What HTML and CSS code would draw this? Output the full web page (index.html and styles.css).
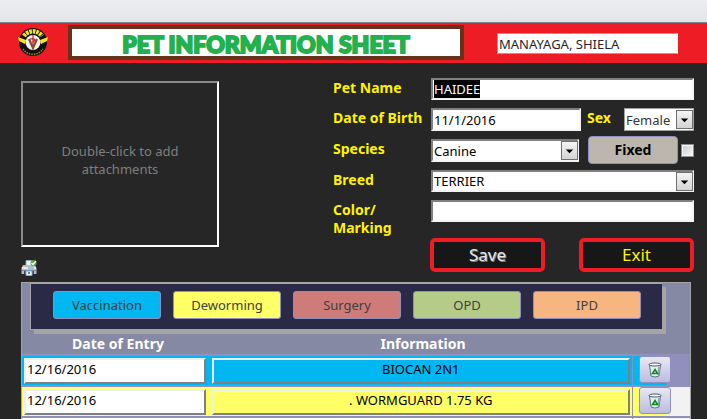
FILE: index.html
```html
<!DOCTYPE html>
<html lang="en">
<head>
<meta charset="utf-8">
<title>Pet Information Sheet</title>
<link rel="stylesheet" href="styles.css">
</head>
<body>
<div class="toolbar"></div>
<header class="banner">
  <svg class="logo" viewBox="0 0 32 32" aria-hidden="true">
    <circle cx="16" cy="16" r="14" fill="#111"/>
    <path d="M7 10A11 11 0 0 1 25 10" fill="none" stroke="#f4e61d" stroke-width="4.500" stroke-dasharray="2.600 0.800"/>
    <path d="M1 11L9 14L8 18L2 15Z M31 11L23 14L24 18L30 15Z" fill="#f4e61d"/>
    <path d="M6 23A12 12 0 0 0 26 23" fill="none" stroke="#8f8824" stroke-width="1.600" stroke-dasharray="1.500 1"/>
    <circle cx="16" cy="16.500" r="7.500" fill="#f4f1ee"/>
    <path d="M12 13L16 22L20 13" fill="none" stroke="#8a4a35" stroke-width="2.200"/>
    <path d="M16 9V20M13 13C19 12 19 15 15 16" fill="none" stroke="#c22a2a" stroke-width="1.200"/>
  </svg>
  <h1 class="title">PET INFORMATION SHEET</h1>
  <input class="user" type="text" value="MANAYAGA, SHIELA" aria-label="Owner">
</header>
<main class="sheet">
  <div class="record">
    <div class="media">
      <button class="attach" type="button">Double-click to add attachments</button>
      <button class="print" type="button" aria-label="Print">
        <svg viewBox="0 0 16 16">
          <path d="M5 0.500H11V6H5Z" fill="#eef4fb" stroke="#8ba3bd"/>
          <path d="M2 5H14L15.500 8V14H0.500V8Z" fill="#b9bcc0"/>
          <path d="M1 7H15V9H1Z" fill="#e9eaec"/>
          <path d="M1 10H15V11H1Z" fill="#85898e"/>
          <path d="M7 7.500H13V8.500H7Z" fill="#4c9be8"/>
          <path d="M3 11H13V14H3Z" fill="#45484c"/>
          <path d="M5 11H11V15.500H5Z" fill="#f3f8fe" stroke="#7fa6d3"/>
          <path d="M7 12H9V14H7Z" fill="#3d84d6"/>
          <circle cx="12.500" cy="3" r="3" fill="#58a83e"/>
          <path d="M10.500 3L12 4.500L15 1" fill="none" stroke="#fff" stroke-width="1.200"/>
        </svg>
      </button>
    </div>
    <form class="form">
      <div class="row">
        <label for="name">Pet Name</label>
        <input class="field" id="name" type="text" value="HAIDEE">
      </div>
      <div class="row tall">
        <label for="dob">Date of Birth</label>
        <input class="field" id="dob" type="text" value="11/1/2016">
        <label class="sex-label" for="sex">Sex</label>
        <span class="combo sex">
          <select class="field" id="sex"><option>Female</option><option>Male</option></select>
          <svg class="arrow" viewBox="0 0 16 18" aria-hidden="true"><path d="M4 8H12L8 12Z"/></svg>
        </span>
      </div>
      <div class="row tall">
        <label for="species">Species</label>
        <span class="combo">
          <select class="field" id="species"><option>Canine</option><option>Feline</option></select>
          <svg class="arrow" viewBox="0 0 16 18" aria-hidden="true"><path d="M4 8H12L8 12Z"/></svg>
        </span>
        <button class="fixed" type="button">Fixed</button>
        <input class="check" type="checkbox" aria-label="Fixed">
      </div>
      <div class="row">
        <label for="breed">Breed</label>
        <span class="combo">
          <select class="field" id="breed"><option>TERRIER</option></select>
          <svg class="arrow" viewBox="0 0 16 18" aria-hidden="true"><path d="M4 8H12L8 12Z"/></svg>
        </span>
      </div>
      <div class="row marking">
        <label for="color">Color/<br>Marking</label>
        <input class="field" id="color" type="text">
      </div>
      <div class="actions">
        <button class="save" type="button">Save</button>
        <button class="exit" type="button">Exit</button>
      </div>
    </form>
  </div>
  <section class="history">
    <nav class="tabs">
      <button class="tab vaccination" type="button">Vaccination</button>
      <button class="tab deworming" type="button">Deworming</button>
      <button class="tab surgery" type="button">Surgery</button>
      <button class="tab opd" type="button">OPD</button>
      <button class="tab ipd" type="button">IPD</button>
    </nav>
    <table class="entries">
      <thead>
        <tr><th class="col-date">Date of Entry</th><th>Information</th><th class="col-del"></th></tr>
      </thead>
      <tbody>
        <tr class="blue">
          <td><input class="cell" type="text" value="12/16/2016" aria-label="Date of entry"></td>
          <td><input class="cell info" type="text" value="BIOCAN 2N1" aria-label="Information"></td>
          <td class="del"><button class="bin" type="button" aria-label="Delete"><svg viewBox="0 0 14 16"><path d="M1.500 3L3 14Q7 16 11 14L12.500 3Z" fill="#e3eef2" stroke="#5d7480"/><path d="M10 5L9.500 13L11 13L12 5Z" fill="#8fa8b4"/><ellipse cx="7" cy="2.500" rx="6" ry="1.500" fill="#fff" stroke="#455a66"/><path d="M7 7.500L9.500 11.500H4.500Z" fill="none" stroke="#0c8a14" stroke-width="1.500"/></svg></button></td>
        </tr>
        <tr class="yellow">
          <td><input class="cell" type="text" value="12/16/2016" aria-label="Date of entry"></td>
          <td><input class="cell info" type="text" value=". WORMGUARD 1.75 KG" aria-label="Information"></td>
          <td class="del"><button class="bin" type="button" aria-label="Delete"><svg viewBox="0 0 14 16"><path d="M1.500 3L3 14Q7 16 11 14L12.500 3Z" fill="#e3eef2" stroke="#5d7480"/><path d="M10 5L9.500 13L11 13L12 5Z" fill="#8fa8b4"/><ellipse cx="7" cy="2.500" rx="6" ry="1.500" fill="#fff" stroke="#455a66"/><path d="M7 7.500L9.500 11.500H4.500Z" fill="none" stroke="#0c8a14" stroke-width="1.500"/></svg></button></td>
        </tr>
        <tr class="blank"><td></td><td></td><td class="del"></td></tr>
      </tbody>
    </table>
  </section>
</main>
<script src="script.js"></script>
</body>
</html>
```
FILE: styles.css
```css
* { box-sizing: border-box; }

body {
  margin: 0;
  height: 100vh;
  display: flex;
  flex-direction: column;
  overflow: hidden;
  background: #262626;
  font: 13px/18px "Noto Sans", "Open Sans", sans-serif;
  color: #000;
}

button, input, select { font: inherit; color: inherit; margin: 0; }
button { padding: 0; }
svg { display: block; }

.toolbar {
  height: 23px;
  flex: none;
  background: linear-gradient(#ecedf1, #e3e5e9);
  border-bottom: 1px solid #7d8791;
}

.banner {
  flex: none;
  height: 40px;
  display: flex;
  align-items: center;
  background: #ee1c24;
  padding: 0 29px 3px 17px;
}
.logo { width: 32px; height: 32px; margin-right: 19px; }
.title {
  flex: 1;
  height: 35px;
  margin: 1px 0 0;
  border: 4px solid #66331a;
  background: #fff;
  color: #22b14c;
  font: 900 23px/30px Lato, sans-serif;
  -webkit-text-stroke: 2px #22b14c;
  text-align: center;
  white-space: nowrap;
}
.user {
  width: 181px;
  height: 21px;
  margin: 4px 0 0 33px;
  padding: 0 1px;
  border: 1px solid #a0a0a0;
  border-right-color: #fff;
  background: #fff;
  color: #1f1f2e;
}

.sheet { flex: 1; min-height: 0; display: flex; flex-direction: column; }

.record { display: flex; padding: 15px 13px 0 21px; }
.media { width: 312px; flex: none; padding-top: 3px; }
.attach {
  display: block;
  width: 198px;
  height: 166px;
  padding: 0 30px 8px;
  background: #262626;
  border: 2px solid;
  border-color: #8a8a8a #fff #fff #8a8a8a;
  color: #7f7f7f;
}
.print {
  display: block;
  width: 16px;
  height: 16px;
  margin-top: 13px;
  border: 0;
  background: none;
}

.form { flex: 1; display: flex; flex-direction: column; }
.row { display: flex; height: 22px; margin-bottom: 8px; }
.row.tall { height: 23px; }
.row label {
  width: 98px;
  flex: none;
  padding-top: 1px;
  color: #fff200;
  font-size: 14px;
  font-weight: bold;
  white-space: nowrap;
}
.row.marking { height: 38px; margin: 0; }
.marking .field { height: 22px; }

.field {
  flex: 1;
  min-width: 0;
  width: 100%;
  height: 100%;
  padding: 0 1px;
  border: 2px solid;
  border-color: #808080 #f4f4f4 #f4f4f4 #808080;
  border-radius: 0;
  outline: 0;
  background: #fff;
  appearance: none;
}
.field::selection { background: #000; color: #fff; }
.combo { position: relative; flex: 1; }
.arrow {
  position: absolute;
  top: 2px;
  right: 1px;
  width: 17px;
  height: 19px;
  border: 1px solid #707070;
  background: linear-gradient(#f4f4f4, #d4d4d4);
  pointer-events: none;
}
.row .sex-label { width: 43px; padding-left: 6px; }
.combo.sex { flex: none; width: 70px; }
.sex .field { border: 1px solid #a0a0a0; color: #333; }
.fixed {
  width: 90px;
  height: 28px;
  margin: -3px 3px 0 9px;
  border: 1px solid #9090bd;
  border-radius: 4px;
  background: #bcb6ae;
  font-size: 14px;
  font-weight: bold;
}
.check {
  width: 13px;
  height: 13px;
  margin-top: 5px;
  appearance: none;
  border: 1px solid #8e8f8f;
  background: linear-gradient(135deg, #c9cdd3, #f6f6f6);
  box-shadow: inset 0 0 0 1px #f4f4f4;
}

.actions { display: flex; justify-content: space-between; margin-left: 97px; }
.actions button {
  width: 115px;
  height: 34px;
  border: 4px solid #ee1c24;
  border-radius: 5px;
  background: #171717;
  font-size: 17px;
}
.save { color: #e6e6e6; text-shadow: 1px 1px 0 #7c8694; }
.exit { color: #fff200; }

.history {
  flex: 1;
  min-height: 0;
  overflow: hidden;
  margin: 6px 16px 0 21px;
  border: 1px solid #a5a5a5;
  border-bottom: 0;
  background: #8689a3;
}
.tabs {
  display: flex;
  gap: 12px;
  height: 47px;
  margin: 0 28px 0 8px;
  padding: 7px 21px 10px 22px;
  border-left: 1px solid #a5a5a5;
  border-bottom: 1px solid #a5a5a5;
  border-top: 1px solid #a5a5a5;
  background: #2a2a46;
  box-shadow: 4px 4px 0 #a5a5a5;
}
.tab {
  flex: 1;
  border: 1px solid #9090bd;
  border-radius: 3px;
  color: #404040;
}
.vaccination { background: #00b7f1; }
.deworming { background: #ffff66; }
.surgery { background: #cf7b79; }
.opd { background: #b5cc88; }
.ipd { background: #f7b581; }

.entries { width: 100%; border-collapse: collapse; table-layout: fixed; }
.entries th {
  height: 24px;
  padding: 5px 0 1px 4px;
  color: #fff;
  font-size: 14px;
  font-weight: bold;
}
.col-date { width: 188px; }
.col-del { width: 58px; }
.entries td {
  height: 31px;
  padding: 2px 2px 1px;
  border-top: 2px solid #9090bd;
  vertical-align: top;
}
.blue { background: #00b7f1; }
.yellow { background: #ffff66; }
.blank { background: #fff; }
.cell {
  display: block;
  width: 182px;
  height: 26px;
  padding: 0 1px 4px;
  border: 2px solid;
  border-color: #eeeeee #808080 #808080 #eeeeee;
  background: #fff;
}
.cell.info { width: 100%; background: transparent; text-align: center; }
.entries .del { padding: 0 0 0 6px; border-left: 1px solid #9090bd; }
.blue .del { background: linear-gradient(90deg, transparent 34px, #9090bd 34px); }
.yellow .del, .blank .del { background: linear-gradient(90deg, transparent 34px, #f2f2f2 34px); }
.bin {
  display: flex;
  align-items: center;
  justify-content: center;
  width: 32px;
  height: 27px;
  border: 1px solid #9090bd;
  border-radius: 3px;
  background: linear-gradient(#e8e8f4, #bcbce0);
}
.bin svg { width: 14px; height: 16px; }
```
FILE: script.js
```js
const petName = document.getElementById("name");
petName.focus();
petName.select();
```
